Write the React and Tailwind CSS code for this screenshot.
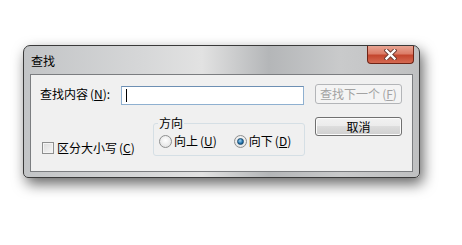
const font = { fontFamily: '"Noto Sans CJK SC", "Microsoft YaHei", sans-serif' };

const Key = ({ k }) => (
  <span className="ml-[2px]">
    (<span className="underline underline-offset-1">{k}</span>)
  </span>
);

const Radio = ({ checked }) => (
  <span className="relative flex h-[13px] w-[13px] items-center justify-center rounded-full border border-[#8e8f8f] bg-[radial-gradient(circle_at_50%_40%,#ffffff,#dcdcdc)]">
    {checked && (
      <span className="h-[7px] w-[7px] rounded-full border border-[#1b4a6e] bg-[radial-gradient(circle_at_40%_35%,#9fd4f5,#1f6fa8_60%,#0c3a5e)]" />
    )}
  </span>
);

export default function App() {
  return (
    <div className="h-[245px] w-[462px] overflow-hidden bg-white pl-[23px] pt-[45px]" style={font}>
      <div className="flex h-[133px] w-[397px] flex-col rounded-t-[7px] rounded-b-[5px] border border-[#3a3a3a] bg-[linear-gradient(90deg,#c2c4c6,#d6d7d8_30%,#e2e2e2_45%,#b4b6b8_62%,#c9cacb_80%,#bfc0c1)] shadow-[3px_6px_14px_rgba(0,0,0,0.6)]">
        {/* title bar */}
        <div className="flex h-[28px] items-start">
          <div className="pl-[7px] pt-[7px] text-[12px] leading-[16px] text-black">查找</div>
          <div className="ml-auto mr-[5px] flex h-[18px] w-[47px] items-center justify-center rounded-b-[4px] border border-t-0 border-[#6e2416] bg-[linear-gradient(180deg,#e8a492,#dc7d68_45%,#c4462e_55%,#d56a52)]">
            <svg width="13" height="11" viewBox="0 0 13 11">
              <path d="M2.5 1.5 L10.5 9.5 M10.5 1.5 L2.5 9.5" stroke="#6a3a32" strokeWidth="4.2" strokeLinecap="square" />
              <path d="M2.5 1.5 L10.5 9.5 M10.5 1.5 L2.5 9.5" stroke="#ffffff" strokeWidth="2.4" strokeLinecap="square" />
            </svg>
          </div>
        </div>
        {/* client area */}
        <div className="mx-[6px] mb-[5px] h-[98px] border border-[#7b7d80] bg-[#f0f0f0] pl-[9px] pt-[9px] text-[12px] leading-[14px] text-black">
          <div className="flex items-start">
            <div className="flex h-[20px] w-[81px] items-center">
              查找内容<Key k="N" />:
            </div>
            <div className="mt-[2px] flex h-[19px] w-[183px] items-center border border-[#8fb0d0] border-t-[#6d8fb3] bg-white pl-[4px]">
              <span className="h-[13px] w-px bg-black" />
            </div>
            <button className="ml-[11px] flex h-[20px] w-[87px] items-center justify-center rounded-[3px] border border-[#b3b5b8] bg-[#f4f4f4] text-[#a3a3a3]">
              查找下一个<Key k="F" />
            </button>
          </div>
          <div className="mt-[12px] flex items-start">
            <div className="flex w-[113px] items-center pl-[2px] pt-[24px]">
              <span className="h-[12px] w-[12px] border border-[#8e8f8f] bg-[linear-gradient(135deg,#dcdcdc,#f6f6f6)] shadow-[inset_0_0_0_1px_#f4f4f4]" />
              <span className="ml-[3px]">
                区分大小写<Key k="C" />
              </span>
            </div>
            <fieldset className="w-[152px] rounded-[3px] border border-[#d5dfe5] pb-[7px]">
              <legend className="ml-[4px] px-[1px] leading-[12px]">方向</legend>
              <div className="mt-[5px] flex h-[14px] items-center pl-[5px]">
                <Radio />
                <span className="ml-[2px]">
                  向上<Key k="U" />
                </span>
                <span className="ml-[17px]">
                  <Radio checked />
                </span>
                <span className="ml-[2px]">
                  向下<Key k="D" />
                </span>
              </div>
            </fieldset>
            <button className="ml-[10px] flex h-[19px] w-[87px] items-center justify-center rounded-[3px] border border-[#707070] bg-[linear-gradient(180deg,#f2f2f2,#ebebeb_50%,#dddddd_50%,#cfcfcf)] shadow-[inset_0_0_0_1px_#fcfcfc]">
              取消
            </button>
          </div>
        </div>
      </div>
    </div>
  );
}
